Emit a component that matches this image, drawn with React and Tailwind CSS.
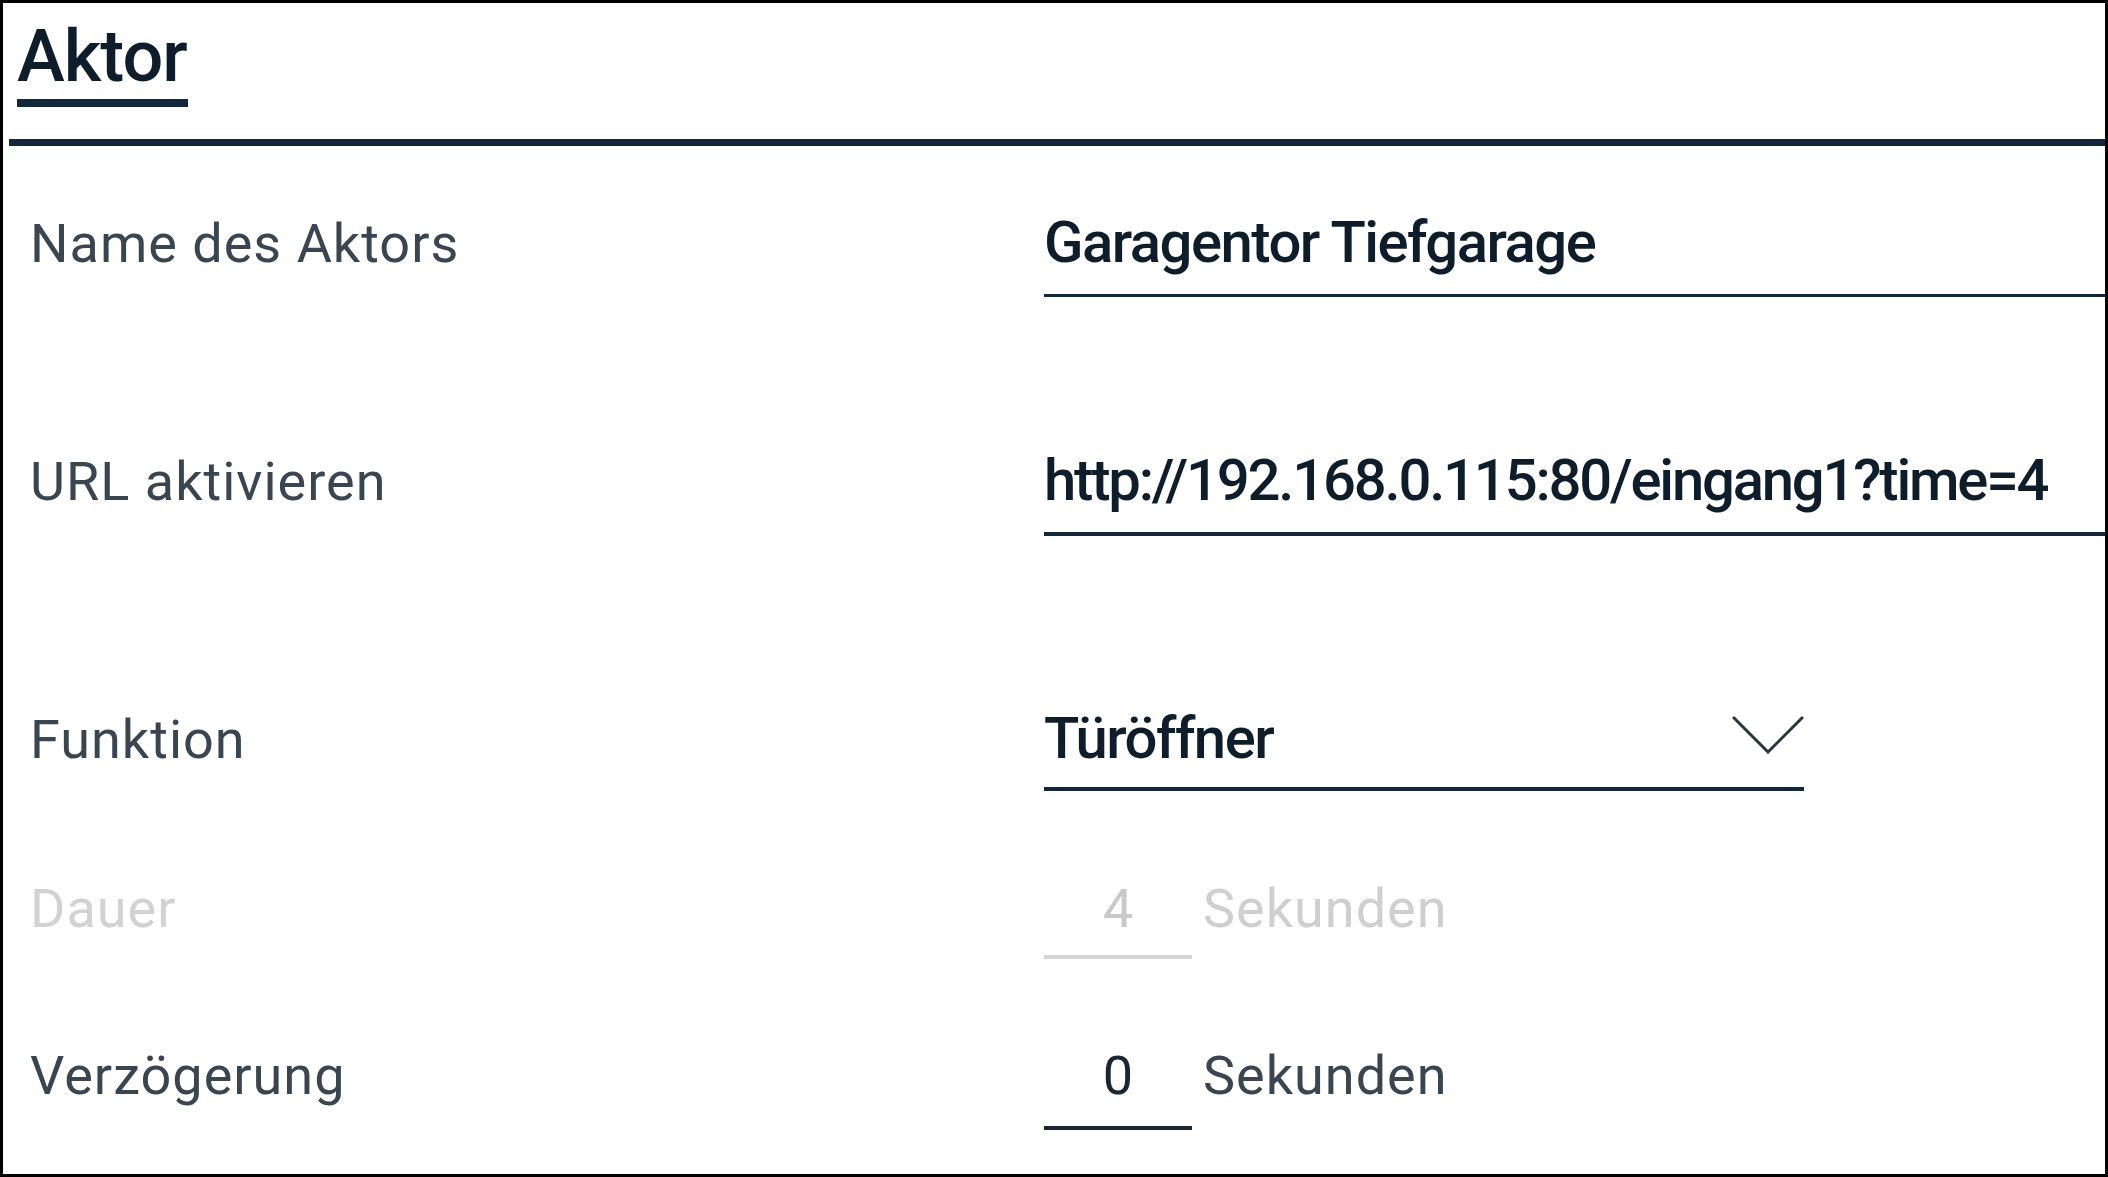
const label = 'w-[1014px] shrink-0 text-[54px] leading-[54px] tracking-[1px] text-[#3a4550]'
const valueText = 'text-[58px] leading-[58px] font-medium tracking-[-1.5px] text-[#0f1d2b]'

function Row({ mt, children }) {
  return (
    <div className={`flex items-baseline pl-[27px] ${mt}`}>
      {children}
    </div>
  )
}

export default function App() {
  return (
    <div
      className="w-[2108px] h-[1177px] border-[3px] border-black bg-white overflow-hidden"
      style={{ fontFamily: 'Roboto, "Liberation Sans", sans-serif' }}
    >
      {/* Tab header */}
      <div className="pl-[14px] pt-[18px]">
        <div className="text-[72px] leading-[72px] font-medium tracking-[-1px] text-[#0f1d2b]">Aktor</div>
        <div className="mt-[6px] h-[8px] w-[171px] bg-[#12283a]" />
      </div>
      <div className="mt-[32px] ml-[6px] h-[7px] bg-[#12283a]" />

      {/* Name */}
      <Row mt="mt-[67px]">
        <div className={label}>Name des Aktors</div>
        <div className={`flex-1 pb-[23px] border-b-[3px] border-[#12283a] ${valueText}`}>
          Garagentor Tiefgarage
        </div>
      </Row>

      {/* URL */}
      <Row mt="mt-[154px]">
        <div className={label}>URL aktivieren</div>
        <div className={`flex-1 pb-[23px] border-b-[4px] border-[#12283a] ${valueText} tracking-[-2.2px]`}>
          http://192.168.0.115:80/eingang1?time=4
        </div>
      </Row>

      {/* Funktion */}
      <Row mt="mt-[173px]">
        <div className={label}>Funktion</div>
        <div className={`w-[760px] pb-[20px] border-b-[4px] border-[#12283a] flex items-baseline justify-between ${valueText}`}>
          <span>Türöffner</span>
          <svg width="72" height="38" viewBox="0 0 72 38" className="self-start mt-[7px]">
            <polyline points="1,1 36,36 71,1" fill="none" stroke="#2a3440" strokeWidth="3" />
          </svg>
        </div>
      </Row>

      {/* Dauer */}
      <Row mt="mt-[89px]">
        <div className={`${label} text-[#d2d2d2]`}>Dauer</div>
        <div className="w-[148px] pb-[17px] border-b-[4px] border-[#d4d4d4] text-center text-[54px] leading-[58px] text-[#c9c9c9]">
          4
        </div>
        <div className="ml-[11px] text-[54px] leading-[58px] tracking-[1px] text-[#cfcfcf]">Sekunden</div>
      </Row>

      {/* Verzögerung */}
      <Row mt="mt-[88px]">
        <div className={label}>Verzögerung</div>
        <div className="w-[148px] pb-[21px] border-b-[4px] border-[#1a2633] text-center text-[54px] leading-[58px] text-[#1a2633]">
          0
        </div>
        <div className="ml-[11px] text-[54px] leading-[58px] tracking-[1px] text-[#3a4550]">Sekunden</div>
      </Row>
    </div>
  )
}
